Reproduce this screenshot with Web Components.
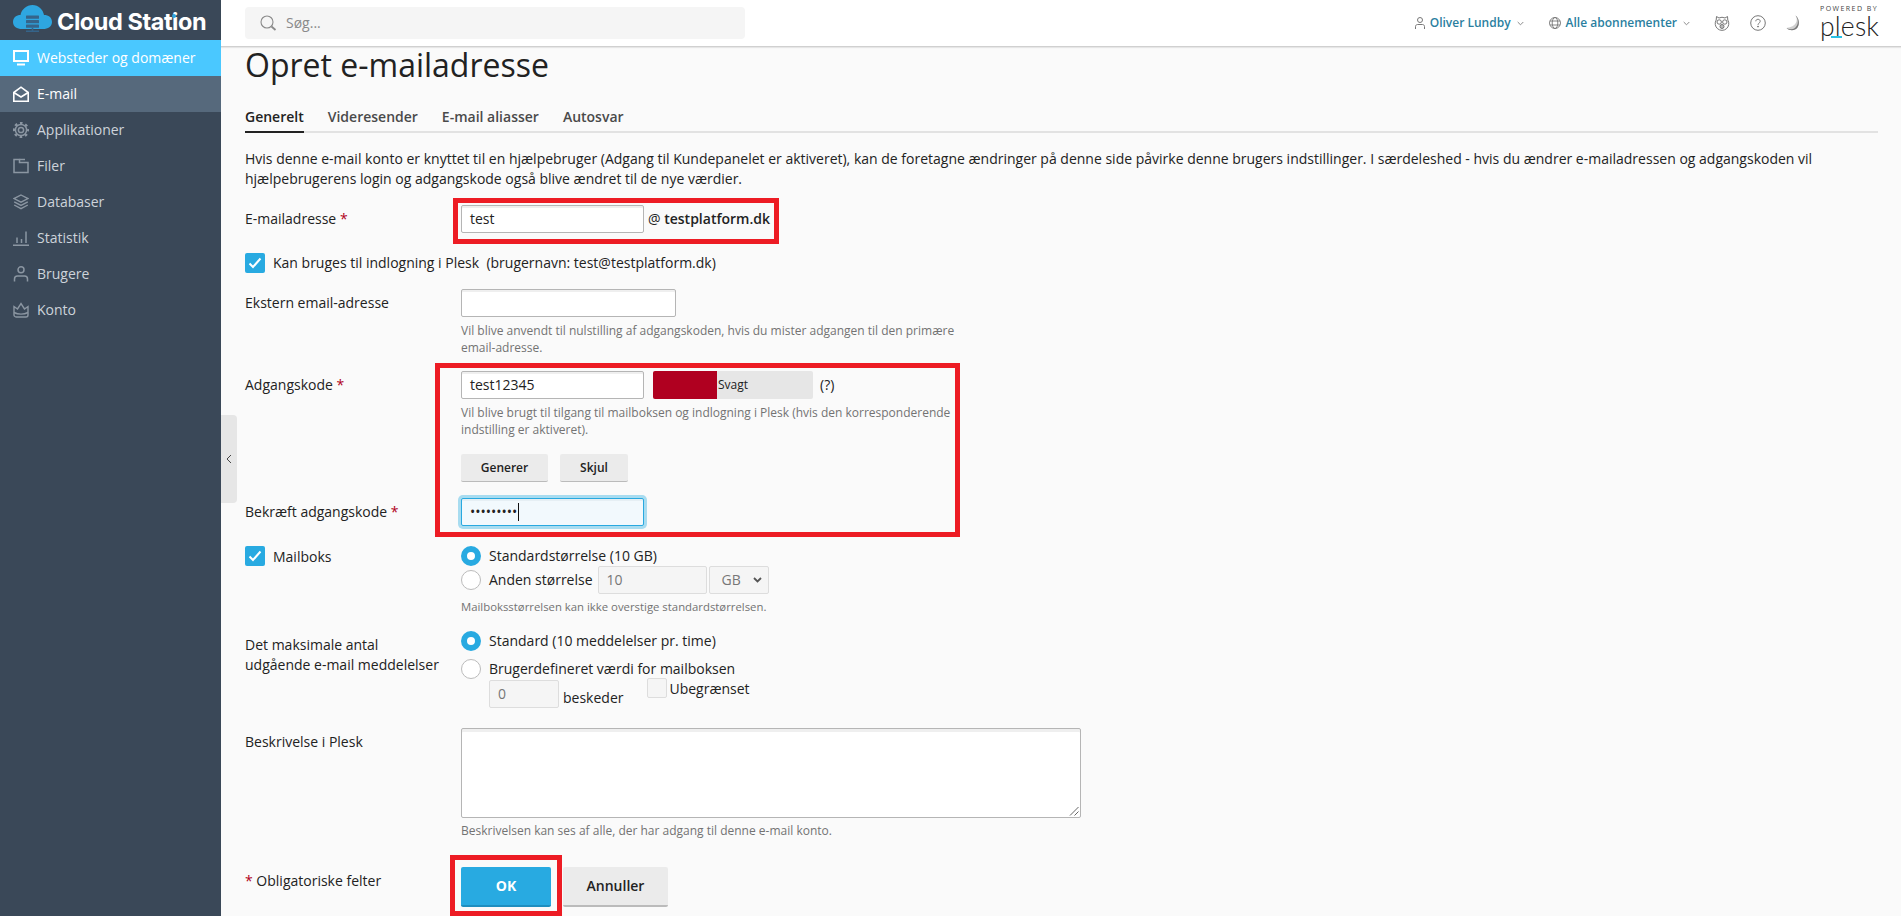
<!DOCTYPE html>
<html lang="da">
<head>
<meta charset="utf-8">
<title>Opret e-mailadresse</title>
<style>
  html, body { margin: 0; height: 100%; overflow: hidden; }
  body { font: 14px/20px "Open Sans", "Liberation Sans", sans-serif; color: #222; }
</style>
</head>
<body>
<cs-app></cs-app>
<script>
'use strict';

/* 共通: open shadow root に html を流し込むだけのベース */
class Base extends HTMLElement {
  constructor() {
    super();
    this._shadow = this.attachShadow({ mode: 'open' });
  }
  connectedCallback() { this._render(); }
}

const ICONS = {
  monitor: `<svg width="16" height="16" viewBox="0 0 16 16" fill="none" stroke="currentColor" stroke-width="2"><rect x="1" y="1" width="14" height="10"/><path d="M4 14.5h8" /></svg>`,
  mail: `<svg width="16" height="16" viewBox="0 0 16 16" fill="none" stroke="currentColor" stroke-width="1.6"><path d="M.8 6.5 8 1.2l7.2 5.3v8.7H.8z"/><path d="M.8 6.5 8 11l7.2-4.5"/></svg>`,
  gear: `<svg width="16" height="16" viewBox="0 0 16 16" fill="none" stroke="currentColor"><circle cx="8" cy="8" r="2.6" stroke-width="1.5"/><circle cx="8" cy="8" r="5.6" stroke-width="1.5"/><circle cx="8" cy="8" r="7" stroke-width="2.4" stroke-dasharray="2.6 2.9" stroke-dashoffset="1.3"/></svg>`,
  folder: `<svg width="16" height="16" viewBox="0 0 16 16" fill="none" stroke="currentColor" stroke-width="1.5"><path d="M1 1.5h5.5v3H15v10H1z"/><path d="M6.5 1.5H12"/></svg>`,
  layers: `<svg width="16" height="16" viewBox="0 0 16 16" fill="none" stroke="currentColor" stroke-width="1.4"><path d="M8 1 15 4.6 8 8.2 1 4.6z"/><path d="M1.2 7.8 8 11.4l6.8-3.6"/><path d="M1.2 11 8 14.7l6.8-3.7"/></svg>`,
  bars: `<svg width="16" height="16" viewBox="0 0 16 16" fill="none" stroke="currentColor" stroke-width="1.5"><path d="M0 15.2h16M4 13V7.5M8.500 13V9M13 13V1.500"/></svg>`,
  user: `<svg width="16" height="16" viewBox="0 0 16 16" fill="none" stroke="currentColor" stroke-width="1.5"><circle cx="8" cy="3.800" r="3"/><path d="M1.500 15.500v-2.500c0-2 1.500-3 3-3h7c1.500 0 3 1 3 3v2.500"/></svg>`,
  crown: `<svg width="16" height="16" viewBox="0 0 16 16" fill="none" stroke="currentColor" stroke-width="1.4"><path d="M1 4.500 4.500 7 8 1.500 11.500 7 15 4.500V13c0 1-1 2-2 2H3c-1 0-2-1-2-2z"/><path d="M1 10.500c4 2 10 2 14 0"/></svg>`
};

/** サイドバーの 1 行 */
class CsNavItem extends Base {
  _render() {
    const state = this.getAttribute('state') || '';
    this._shadow.innerHTML = `
      <style>
        :host { display: block; }
        .item {
          height: 36px; display: flex; align-items: center; gap: 8px; padding-left: 13px;
          color: #cdd3da; font-size: 14px;
        }
        .icon { display: flex; color: #8b96a2; }
        .active { background: #4ac8ff; color: #fff; }
        .hover { background: #56697c; color: #fff; }
        .active .icon, .hover .icon { color: #fff; }
      </style>
      <div class="item ${state}">
        <span class="icon">${ICONS[this.getAttribute('icon')]}</span>
        <slot></slot>
      </div>`;
  }
}
customElements.define('cs-nav-item', CsNavItem);

class CsSidebar extends Base {
  _render() {
    this._shadow.innerHTML = `
      <style>
        :host { display: block; background: #3a4858; }
        .logo { height: 40px; display: flex; align-items: center; padding-left: 13px; gap: 5px; position: relative; }
        .logo svg { flex: none; margin-top: -3px; }
        .name { font: 700 23.5px/40px Inter, "Open Sans", sans-serif; color: #fff; letter-spacing: -.45px; margin-top: 4px; }
        .dot { position: absolute; left: 172px; top: 14px; width: 4px; height: 4px; border-radius: 50%; background: #2ea6e0; }
      </style>
      <div class="logo">
        <svg width="39" height="28" viewBox="0 0 39 28">
          <path fill="#2ea6e0" d="M9 24C4 24 0 21.500 0 17 0 12.500 3.500 10 7.500 10 8.500 4.500 13.500 0 19.500 0 25.500 0 30 4.500 31 10c4.500 0 8 2.500 8 7s-4 7-9 7z"/>
          <g fill="#35648a">
            <rect x="13" y="10.500" width="13" height="3.200" rx=".5"/>
            <rect x="13" y="15" width="13" height="3.200" rx=".5"/>
            <rect x="13" y="19.500" width="13" height="3.200" rx=".5"/>
            <rect x="18.700" y="22.700" width="1.600" height="3.500"/>
            <rect x="13" y="25.500" width="13" height="1.500"/>
          </g>
        </svg>
        <span class="name">Cloud Station</span>
        <span class="dot"></span>
      </div>
      <cs-nav-item icon="monitor" state="active">Websteder og domæner</cs-nav-item>
      <cs-nav-item icon="mail" state="hover">E-mail</cs-nav-item>
      <cs-nav-item icon="gear">Applikationer</cs-nav-item>
      <cs-nav-item icon="folder">Filer</cs-nav-item>
      <cs-nav-item icon="layers">Databaser</cs-nav-item>
      <cs-nav-item icon="bars">Statistik</cs-nav-item>
      <cs-nav-item icon="user">Brugere</cs-nav-item>
      <cs-nav-item icon="crown">Konto</cs-nav-item>`;
  }
}
customElements.define('cs-sidebar', CsSidebar);

class CsTopbar extends Base {
  _render() {
    const caret = `<svg class="caret" width="7" height="5" viewBox="0 0 7 5" fill="none" stroke="#8a8a8a"><path d="M.7 1 3.500 3.800 6.300 1"/></svg>`;
    this._shadow.innerHTML = `
      <style>
        :host {
          display: flex; align-items: center; height: 46px; background: #fff;
          border-bottom: 1px solid #d0d0d0; box-shadow: 0 1px 1px rgba(0,0,0,.08);
          box-sizing: content-box; padding-left: 24px; position: relative; z-index: 2;
        }
        .search {
          width: 500px; height: 32px; background: #f5f5f5; border-radius: 4px;
          display: flex; align-items: center; gap: 8px; padding-left: 15px; box-sizing: border-box;
          color: #8a8a8a; font-size: 14px;
        }
        .right { margin-left: auto; display: flex; align-items: center; height: 46px; }
        .menu { display: flex; align-items: center; color: #2b7f9f; font-size: 12px; font-weight: 600; gap: 5px; }
        .menu .caret { margin-left: 1px; }
        .user { margin-right: 25px; }
        .subs { margin-right: 24px; }
        .tool { display: flex; margin-right: 20px; }
        .plesk { width: 60px; margin-right: 21px; margin-left: -1px; position: relative; text-align: left; height: 46px; }
        .pw { font: 400 7px/8px "Open Sans", sans-serif; letter-spacing: 1.45px; color: #444; display: block; margin-top: 5px; white-space: nowrap; }
        .pl { font: 300 26.5px/26px Lato, sans-serif; color: #222; display: block; letter-spacing: .2px; }
        .bar { position: absolute; left: 11px; top: 36px; width: 11px; height: 2px; background: #2bc0e4; }
      </style>
      <div class="search">
        <svg width="18" height="16" viewBox="0 0 18 16" fill="none" stroke="#8a8a8a" stroke-width="1.1"><circle cx="7" cy="7" r="6"/><path d="m11.500 11.500 4 3.500" stroke-width="1.800"/></svg>
        <span>Søg...</span>
      </div>
      <div class="right">
        <div class="menu user">
          <svg width="10" height="12" viewBox="0 0 10 12" fill="none" stroke="#777"><circle cx="5" cy="3" r="2.500"/><path d="M.5 12V9.500C.5 8.300 1.500 7.500 2.500 7.500h5c1 0 2 .8 2 2V12"/></svg>
          <span>Oliver Lundby</span>${caret}
        </div>
        <div class="menu subs">
          <svg width="12" height="12" viewBox="0 0 12 12" fill="none" stroke="#777" stroke-width=".9"><circle cx="6" cy="6" r="5.500"/><ellipse cx="6" cy="6" rx="2.800" ry="5.500"/><path d="M1 4h10M1 8h10"/></svg>
          <span>Alle abonnementer</span>${caret}
        </div>
        <span class="tool">
          <svg width="16" height="16" viewBox="0 0 16 16" fill="none" stroke="#777"><path d="M2.500 1.500 5 3a6.500 6.500 0 0 1 6 0l2.500-1.500.3 3.500a6.800 6.800 0 1 1-11.600 0z"/><circle cx="5.200" cy="7" r="2.200"/><circle cx="10.800" cy="7" r="2.200"/><circle cx="8" cy="11.500" r="2" fill="#bbb"/></svg>
        </span>
        <span class="tool">
          <svg width="16" height="16" viewBox="0 0 16 16" fill="none" stroke="#777"><circle cx="8" cy="8" r="7.300"/><path d="M5.800 6.300C5.800 5 6.800 4.300 8 4.300s2.200.8 2.200 2c0 1.800-2.200 1.800-2.200 3.500"/><circle cx="8" cy="11.600" r=".5" fill="#777"/></svg>
        </span>
        <span class="tool">
          <svg width="15" height="16" viewBox="0 0 15 16" fill="none"><path d="M9.500.5c3 4.500 1 11.500-9 12.500 3 3 8.500 3 11-.5S13 3 9.500.5z" fill="#cfcfcf"/><path d="M9.500.5c3 3.500 3.500 9-.5 12.500-2.500 1.800-5.500 1.500-8.500 0 3 3 8.500 3 11-.5S13 3 9.500.5z" fill="#777"/></svg>
        </span>
        <div class="plesk">
          <span class="pw">POWERED BY</span>
          <span class="pl">plesk</span>
          <span class="bar"></span>
        </div>
      </div>`;
  }
}
customElements.define('cs-topbar', CsTopbar);

/** ラベル列 + フィールド列の 1 行 */
class CsRow extends Base {
  _render() {
    this._shadow.innerHTML = `
      <style>
        :host { display: grid; grid-template-columns: 216px 1fr; }
        .label { padding-top: 4px; padding-right: 8px; }
      </style>
      <div class="label"><slot name="label"></slot></div>
      <div><slot></slot></div>`;
  }
}
customElements.define('cs-row', CsRow);

/** 見た目だけの入力欄（値はスロットのテキスト） */
class CsField extends Base {
  _render() {
    this._shadow.innerHTML = `
      <style>
        :host {
          display: inline-flex; align-items: center; box-sizing: border-box; height: 28px;
          width: 183px; padding: 0 8px; background: #fff; border: 1px solid #b5b5b5; border-radius: 2px;
          box-shadow: inset 0 2px 0 #efefef; font-size: 14px; color: #222; flex: none;
        }
        :host([disabled]) { background: #f5f5f5; border-color: #ddd; box-shadow: none; color: #777; }
        :host([focused]) {
          background: #f2f9fd; border-color: #29a9e0; box-shadow: inset 0 2px 0 #e6eff4, 0 0 0 3px #a8dcf0;
        }
      </style><slot></slot>`;
  }
}
customElements.define('cs-field', CsField);

class CsHelp extends Base {
  _render() {
    this._shadow.innerHTML = `
      <style>:host { display: block; font-size: 12px; line-height: 17px; color: #737373; }</style>
      <slot></slot>`;
  }
}
customElements.define('cs-help', CsHelp);

class CsCheck extends Base {
  _render() {
    const on = this.hasAttribute('checked');
    this._shadow.innerHTML = `
      <style>
        :host {
          display: inline-flex; align-items: center; justify-content: center; flex: none;
          width: 20px; height: 20px; box-sizing: border-box; border-radius: 2px;
          background: ${on ? '#28aae1' : '#f5f5f5'}; border: ${on ? '0' : '1px solid #ddd'};
        }
      </style>
      ${on ? `<svg width="14" height="12" viewBox="0 0 14 12" fill="none" stroke="#fff" stroke-width="2"><path d="M1.500 6.500 5 10l7.500-8.500"/></svg>` : ''}`;
  }
}
customElements.define('cs-check', CsCheck);

class CsRadio extends Base {
  _render() {
    const on = this.hasAttribute('checked');
    this._shadow.innerHTML = `
      <style>
        :host {
          display: inline-block; flex: none; width: 20px; height: 20px; box-sizing: border-box; border-radius: 50%;
          ${on ? 'background:#fff;border:6px solid #28aae1;' : 'background:#fff;border:1px solid #bbb;'}
        }
      </style>`;
  }
}
customElements.define('cs-radio', CsRadio);

class CsButton extends Base {
  _render() {
    this._shadow.innerHTML = `
      <style>
        :host {
          display: inline-flex; align-items: center; justify-content: center; box-sizing: border-box;
          height: 28px; background: #ebebeb; border-bottom: 1px solid #bbb; border-radius: 2px;
          font-size: 12px; font-weight: 600; color: #222; flex: none;
        }
        :host([big]) { height: 40px; font-size: 14px; border-bottom-width: 2px; }
        :host([primary]) { background: #28aae1; border-bottom-color: #1e8ebf; color: #fff; font-weight: 700; }
      </style><slot></slot>`;
  }
}
customElements.define('cs-button', CsButton);

class CsTabs extends Base {
  _render() {
    this._shadow.innerHTML = `
      <style>
        :host { display: flex; gap: 24px; height: 32px; border-bottom: 2px solid #e2e2e2; box-sizing: border-box; font-size: 14px; font-weight: 600; color: #4a4a4a; }
        span { line-height: 32px; height: 32px; box-sizing: border-box; }
        .on { color: #222; border-bottom: 2px solid #222; }
      </style>
      <span class="on">Generelt</span><span>Videresender</span><span>E-mail aliasser</span><span>Autosvar</span>`;
  }
}
customElements.define('cs-tabs', CsTabs);

/* レビュー用の赤枠。内容の上に重ねるだけ */
class CsMarker extends Base {
  _render() {
    this._shadow.innerHTML = `
      <style>:host { position: absolute; box-sizing: border-box; border: 5px solid #ed1c24; pointer-events: none; }</style>`;
  }
}
customElements.define('cs-marker', CsMarker);

class CsPage extends Base {
  _render() {
    this._shadow.innerHTML = `
      <style>
        :host {
          display: block; position: relative; background: #fafafa; padding: 0 23px 0 24px;
          font-size: 14px; line-height: 20px; color: #222;
        }
        h1 { margin: 0; font-size: 32px; font-weight: 400; line-height: 36px; color: #222; }
        cs-tabs { margin-top: 18px; }
        .intro { margin: 16px 0 0; }
        .line { display: flex; align-items: center; }
        .at { margin-left: 4px; }
        .at b { font-weight: 600; }
        .chk { display: flex; align-items: center; gap: 8px; }
        b.req { font-weight: 400; color: #b00020; }
        .radio { display: flex; align-items: center; gap: 8px; height: 20px; }
        .strength {
          width: 160px; height: 28px; margin-left: 9px; background: #e6e6e6; border-radius: 2px;
          display: flex; align-items: center; font-size: 12px; overflow: hidden;
        }
        .strength i { display: block; width: 64px; height: 100%; background: #b00020; margin-right: 1px; }
        .q { margin-left: 7px; font-size: 14px; }
        .caret { display: inline-block; width: 1px; height: 18px; background: #111; margin-left: 1px; }
        .select { justify-content: space-between; width: 60px; padding: 0 6px 0 12px; }
        .toggle {
          position: absolute; left: 0; top: 368px; width: 16px; height: 88px; background: #e6e6e6;
          border-radius: 0 4px 4px 0; display: flex; align-items: center; justify-content: center;
        }
        textarea-box { display: block; position: relative; width: 620px; height: 90px; box-sizing: border-box; background: #fff; border: 1px solid #b5b5b5; border-radius: 2px; box-shadow: inset 0 3px 0 #efefef; }
        textarea-box svg { position: absolute; right: 1px; bottom: 1px; }
      </style>

      <h1>Opret e-mailadresse</h1>
      <cs-tabs></cs-tabs>
      <p class="intro">Hvis denne e-mail konto er knyttet til en hjælpebruger (Adgang til Kundepanelet er aktiveret), kan de foretagne ændringer på denne side påvirke denne brugers indstillinger. I særdeleshed - hvis du ændrer e-mailadressen og adgangskoden vil hjælpebrugerens login og adgangskode også blive ændret til de nye værdier.</p>

      <cs-row style="margin-top:16px">
        <span slot="label">E-mailadresse <b class="req">*</b></span>
        <div class="line"><cs-field>test</cs-field><span class="at">@ <b>testplatform.dk</b></span></div>
      </cs-row>

      <div class="chk" style="margin-top:20px"><cs-check checked></cs-check><span>Kan bruges til indlogning i Plesk&nbsp; (brugernavn: test@testplatform.dk)</span></div>

      <cs-row style="margin-top:16px">
        <span slot="label">Ekstern email-adresse</span>
        <div>
          <cs-field style="width:215px;display:flex"></cs-field>
          <cs-help style="margin-top:5px;width:510px">Vil blive anvendt til nulstilling af adgangskoden, hvis du mister adgangen til den primære email-adresse.</cs-help>
        </div>
      </cs-row>

      <cs-row style="margin-top:15px">
        <span slot="label">Adgangskode <b class="req">*</b></span>
        <div>
          <div class="line">
            <cs-field>test12345</cs-field>
            <div class="strength"><i></i><span>Svagt</span></div>
            <span class="q">(?)</span>
          </div>
          <cs-help style="margin-top:5px;width:510px">Vil blive brugt til tilgang til mailboksen og indlogning i Plesk (hvis den korresponderende indstilling er aktiveret).</cs-help>
          <div class="line" style="margin-top:16px;gap:12px">
            <cs-button style="width:87px">Generer</cs-button>
            <cs-button style="width:68px">Skjul</cs-button>
          </div>
        </div>
      </cs-row>

      <cs-row style="margin-top:16px">
        <span slot="label">Bekræft adgangskode <b class="req">*</b></span>
        <cs-field focused>•••••••••<span class="caret"></span></cs-field>
      </cs-row>

      <cs-row style="margin-top:20px">
        <div slot="label" class="chk" style="margin-top:-4px"><cs-check checked></cs-check><span style="position:relative;top:1px">Mailboks</span></div>
        <div>
          <div class="radio"><cs-radio checked></cs-radio><span>Standardstørrelse (10 GB)</span></div>
          <div class="radio" style="height:28px">
            <cs-radio></cs-radio><span>Anden størrelse</span>
            <cs-field disabled style="width:109px;margin-left:-3px">10</cs-field>
            <cs-field disabled class="select" style="margin-left:-6px">GB<svg width="9" height="6" viewBox="0 0 9 6" fill="none" stroke="#555" stroke-width="1.800"><path d="m1 1 3.500 3.500L8 1"/></svg></cs-field>
          </div>
          <cs-help style="margin-top:4px;font-size:11.350px">Mailboksstørrelsen kan ikke overstige standardstørrelsen.</cs-help>
        </div>
      </cs-row>

      <cs-row style="margin-top:16px">
        <span slot="label">Det maksimale antal<br>udgående e-mail meddelelser</span>
        <div>
          <div class="radio"><cs-radio checked></cs-radio><span>Standard (10 meddelelser pr. time)</span></div>
          <div class="radio" style="margin-top:8px"><cs-radio></cs-radio><span>Brugerdefineret værdi for mailboksen</span></div>
          <div class="line" style="margin:1px 0 0 28px">
            <cs-field disabled style="width:70px">0</cs-field>
            <span style="margin-left:4px;align-self:flex-end;line-height:20px">beskeder</span>
            <cs-check style="margin:-2px 0 0 24px;align-self:flex-start"></cs-check>
            <span style="margin:-1px 0 0 2px;align-self:flex-start">Ubegrænset</span>
          </div>
        </div>
      </cs-row>

      <cs-row style="margin-top:20px">
        <span slot="label">Beskrivelse i Plesk</span>
        <div>
          <textarea-box><svg width="10" height="10" viewBox="0 0 10 10" stroke="#666" fill="none"><path d="M1 9.500 9.500 1M5.500 9.500l4-4"/></svg></textarea-box>
          <cs-help style="margin-top:4px">Beskrivelsen kan ses af alle, der har adgang til denne e-mail konto.</cs-help>
        </div>
      </cs-row>

      <cs-row style="margin-top:28px">
        <span slot="label"><b class="req">*</b> Obligatoriske felter</span>
        <div class="line" style="gap:12px">
          <cs-button big primary style="width:90px">OK</cs-button>
          <cs-button big style="width:105px">Annuller</cs-button>
        </div>
      </cs-row>

      <div class="toggle"><svg width="6" height="10" viewBox="0 0 6 10" fill="none" stroke="#444"><path d="M5 1 1 5l4 4"/></svg></div>

      <cs-marker style="left:232px;top:151px;width:326px;height:46px"></cs-marker>
      <cs-marker style="left:214px;top:316px;width:525px;height:174px"></cs-marker>
      <cs-marker style="left:229px;top:808px;width:112px;height:61px"></cs-marker>`;
  }
}
customElements.define('cs-page', CsPage);

class CsApp extends Base {
  _render() {
    this._shadow.innerHTML = `
      <style>
        :host {
          display: grid; grid-template-columns: 221px 1fr; grid-template-rows: 47px 1fr;
          height: 916px; overflow: hidden;
        }
        cs-sidebar { grid-row: 1 / 3; }
      </style>
      <cs-sidebar></cs-sidebar>
      <cs-topbar></cs-topbar>
      <cs-page></cs-page>`;
  }
}
customElements.define('cs-app', CsApp);
</script>
</body>
</html>
